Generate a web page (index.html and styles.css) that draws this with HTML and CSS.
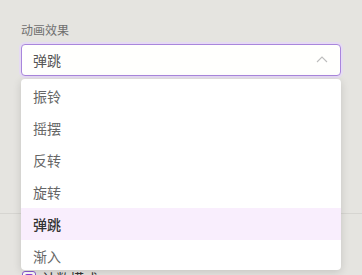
FILE: index.html
```html
<!DOCTYPE html>
<html lang="zh">
<head>
<meta charset="utf-8">
<link rel="stylesheet" href="styles.css">
</head>
<body>
<div class="page">
  <div class="field">
    <div class="label">动画效果</div>
    <div class="select">
      <span class="value">弹跳</span>
      <svg class="chev" width="12" height="8" viewBox="0 0 12 8"><path d="M1 7 L6 2 L11 7" fill="none" stroke="#bdbdbd" stroke-width="1.1"/></svg>
    </div>
  </div>
  <div class="divider"></div>
  <div class="row">
    <span class="check"></span>
    <span class="row-text">计数模式</span>
  </div>
  <ul class="menu">
    <li class="item">振铃</li>
    <li class="item">摇摆</li>
    <li class="item">反转</li>
    <li class="item">旋转</li>
    <li class="item active">弹跳</li>
    <li class="item">渐入</li>
  </ul>
</div>
</body>
</html>
```

FILE: styles.css
```css
html, body {
  margin: 0;
  padding: 0;
}
body {
  background: #e5e4e0;
  font-family: "Noto Sans CJK SC", "Noto Sans", sans-serif;
  width: 362px;
  height: 275px;
  overflow: hidden;
}
.page {
  position: relative;
  height: 275px;
}
.field {
  padding: 20px 21px 0;
}
.label {
  font-size: 12px;
  line-height: 20px;
  color: #6f6f6f;
  margin-bottom: 4px;
}
.select {
  box-sizing: border-box;
  height: 32px;
  border: 1px solid #a986dc;
  border-radius: 4px;
  box-shadow: 0 0 0 2px #e6dbf3;
  background: #fffffd;
  display: flex;
  align-items: center;
  justify-content: space-between;
  padding: 0 12px 0 11px;
}
.value {
  font-size: 14px;
  color: #555;
}
.chev {
  display: block;
  margin-top: -2px;
}
.divider {
  margin-top: 137px;
  height: 1px;
  background: #d6d5d1;
}
.row {
  display: flex;
  align-items: center;
  gap: 6px;
  padding: 54px 0 0 22px;
}
.check {
  width: 12px;
  height: 12px;
  border: 1px solid #8a5bd0;
  border-radius: 3px;
  background: #fff;
  position: relative;
}
.check::after {
  content: "";
  position: absolute;
  left: 2px;
  top: 2px;
  width: 8px;
  height: 8px;
  border-radius: 2px;
  background: #8e3fd6;
}
.row-text {
  font-size: 14px;
  color: #333;
}
.menu {
  position: absolute;
  top: 79px;
  left: 21px;
  width: 320px;
  height: 191px;
  margin: 0;
  padding: 1px 0 0;
  list-style: none;
  background: #fff;
  border-radius: 4px;
  box-shadow: 0 2px 8px rgba(0, 0, 0, 0.14);
  overflow: hidden;
  box-sizing: border-box;
}
.item {
  height: 32px;
  line-height: 32px;
  padding-left: 12px;
  font-size: 14px;
  color: #666;
}
.item.active {
  background: #f9eefd;
  color: #333;
  font-weight: 500;
}
```
